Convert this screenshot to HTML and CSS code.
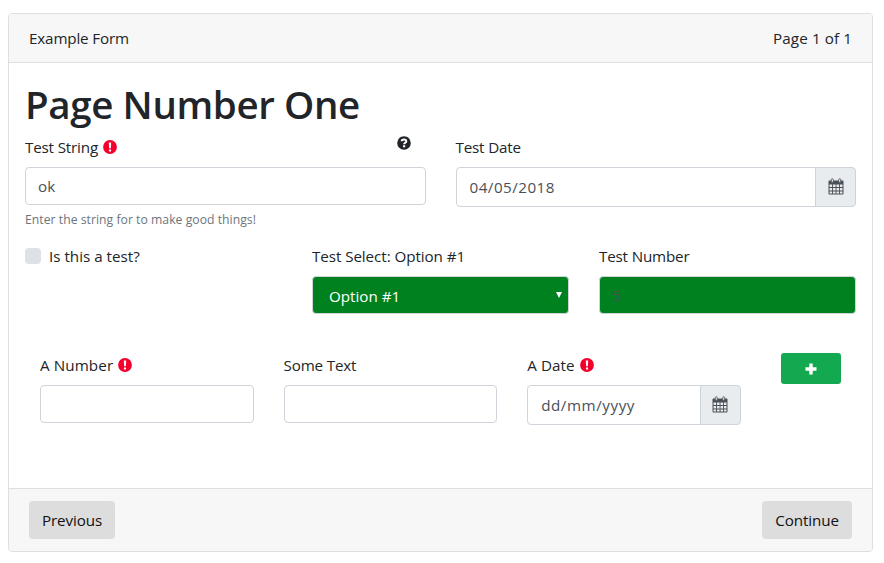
FILE: index.html
```html
<!DOCTYPE html>
<html lang="en">
<head>
<meta charset="utf-8">
<title>Example Form</title>
<link rel="stylesheet" href="styles.css">
</head>
<body>
<svg class="sprite" aria-hidden="true">
  <symbol id="required" viewBox="0 0 14 14"><circle cx="7" cy="7" r="6.9" fill="#f5002d"/><path d="M5.8 2.5h2.4L7.9 8.3H6.1zM5.9 9.4h2.2v2H5.9z" fill="#fff"/></symbol>
  <symbol id="help" viewBox="0 0 14 14"><circle cx="7" cy="7" r="6.8" fill="#212529"/><path d="M4.7 5.3C4.700 2.900 9.300 2.900 9.300 5.200c0 1.500-2.200 1.500-2.200 3.100" fill="none" stroke="#fff" stroke-width="2"/><path d="M6 9.300h2.200v2H6z" fill="#fff"/></symbol>
  <symbol id="calendar" viewBox="0 0 16 17"><path d="M1.500 2.500h13a1 1 0 0 1 1 1v12a1 1 0 0 1-1 1h-13a1 1 0 0 1-1-1v-12a1 1 0 0 1 1-1z" fill="#495057"/><path d="M1.500 6.500h2.600v2.500H1.500zM5 6.500h2.600v2.500H5zM8.500 6.500h2.600v2.500H8.500zM12 6.500h2.500v2.500H12zM1.500 10h2.600v2.500H1.500zM5 10h2.600v2.500H5zM8.500 10h2.600v2.500H8.500zM12 10h2.500v2.500H12zM1.500 13.500h2.600v2H1.500zM5 13.500h2.600v2H5zM8.500 13.500h2.600v2H8.500zM12 13.500h2.500v2H12z" fill="#e9ecef"/><rect x="3.300" y=".7" width="2" height="3.700" rx="1" fill="#e9ecef" stroke="#495057" stroke-width=".8"/><rect x="10.700" y=".7" width="2" height="3.700" rx="1" fill="#e9ecef" stroke="#495057" stroke-width=".8"/></symbol>
</svg>
<form class="card">
  <header class="card-header"><span class="title">Example Form</span><span class="pager">Page 1 of 1</span></header>
  <main class="card-body">
    <h1><span>Page Number One</span></h1>
    <div class="row halves">
      <div class="field">
        <div class="label-line"><label for="string">Test String</label><svg class="required"><use href="#required"/></svg><svg class="help"><use href="#help"/></svg></div>
        <input id="string" class="control" type="text" value="ok">
        <small>Enter the string for to make good things!</small>
      </div>
      <div class="field">
        <div class="label-line"><label for="date">Test Date</label></div>
        <div class="input-group"><input id="date" class="control date-value" type="text" value="04/05/2018"><span class="addon"><svg><use href="#calendar"/></svg></span></div>
      </div>
    </div>
    <div class="row thirds">
      <div class="check"><span class="box"></span><span class="check-text">Is this a test?</span></div>
      <div class="field">
        <div class="label-line"><label class="select-label" for="select">Test Select: Option #1</label></div>
        <div class="control green select" id="select"><span>Option #1</span><svg class="arrow" viewBox="0 0 6 6"><path d="M0 0h6L3 6z" fill="#fff"/></svg></div>
      </div>
      <div class="field">
        <div class="label-line"><label for="number">Test Number</label></div>
        <input id="number" class="control green" type="text" value="5">
      </div>
    </div>
    <div class="row repeat">
      <div class="field">
        <div class="label-line"><label class="a-number" for="a-number">A Number</label><svg class="required"><use href="#required"/></svg></div>
        <input id="a-number" class="control" type="text">
      </div>
      <div class="field">
        <div class="label-line"><label for="some-text">Some Text</label></div>
        <input id="some-text" class="control" type="text">
      </div>
      <div class="field">
        <div class="label-line"><label class="a-date" for="a-date">A Date</label><svg class="required"><use href="#required"/></svg></div>
        <div class="input-group"><input id="a-date" class="control date-empty" type="text" value="dd/mm/yyyy"><span class="addon"><svg><use href="#calendar"/></svg></span></div>
      </div>
      <button class="add" type="button" aria-label="Add"><svg viewBox="0 0 12 12"><path d="M4.300.5h3.400v3.800h3.800v3.400H7.700v3.800H4.300V7.700H.5V4.300h3.800z" fill="#fff"/></svg></button>
    </div>
  </main>
  <footer class="card-footer"><button class="btn previous" type="button">Previous</button><button class="btn continue" type="button">Continue</button></footer>
</form>
</body>
</html>
```
FILE: styles.css
```css
* { box-sizing: border-box; }
body {
  margin: 0;
  padding: 13px 11px 11px 8px;
  background: #fff;
  color: #212529;
  font: 15.2px/24px "Open Sans", "Noto Sans", sans-serif;
}
.sprite { display: none; }
svg { display: block; flex: none; }
.card {
  height: 539px;
  display: flex;
  flex-direction: column;
  border: 1px solid #dfdfdf;
  border-radius: 4px;
  overflow: hidden;
}
.card-header, .card-footer {
  display: flex;
  justify-content: space-between;
  background: #f7f7f7;
  padding: 12px 20px;
}
.card-header { height: 49px; border-bottom: 1px solid #dfdfdf; }
.card-footer { height: 63px; border-top: 1px solid #dfdfdf; }
.card-body { flex: 1; padding: 16px; }
.title { letter-spacing: -.15px; }
.pager { letter-spacing: .1px; }
h1 { margin: 0 0 8px; font-size: 38.5px; letter-spacing: -.38px; line-height: 50px; height: 48px; font-weight: 600; white-space: nowrap; }
.row { display: grid; column-gap: 30px; }
.halves { grid-template-columns: 1fr 1fr; height: 109px; }
.thirds { grid-template-columns: repeat(3, 1fr); height: 109px; }
.repeat { grid-template-columns: repeat(3, 213.600px) 60px; padding-left: 15px; align-items: start; }
.field { min-width: 0; }
.label-line { height: 24px; margin-bottom: 8px; display: flex; align-items: center; white-space: nowrap; letter-spacing: -.17px; }
.select-label { letter-spacing: -.07px; }
.a-number, .a-date { letter-spacing: .1px; }
.required { width: 14px; height: 14px; margin-left: 5px; }
.help { width: 14px; height: 14px; margin: -8px 15px 0 auto; }
.control {
  display: block;
  width: 100%;
  height: 38px;
  padding: 6px 12px;
  border: 1px solid #ced4da;
  border-radius: 4px;
  background: #fff;
  color: #495057;
  font: inherit;
}
small { display: block; margin-top: 5px; font-size: 12.200px; letter-spacing: .03px; line-height: 20px; color: #6c757d; white-space: nowrap; }
.input-group { display: flex; height: 40px; }
.input-group .control { flex: 1; min-width: 0; height: 40px; padding-left: 13px; border-radius: 4px 0 0 4px; }
.date-value { letter-spacing: .48px; }
.date-empty { letter-spacing: .55px; }
.addon {
  width: 41px;
  margin-left: -1px;
  display: grid;
  place-items: center;
  background: #e9ecef;
  border: 1px solid #ced4da;
  border-radius: 0 4px 4px 0;
}
.addon svg { width: 16px; height: 17px; margin-top: -2px; }
.check { display: flex; height: 24px; align-items: center; }
.box { width: 16px; height: 16px; margin-right: 8px; border-radius: 4px; background: #dee2e6; }
.green { background: #00811f; }
.select { display: flex; align-items: center; justify-content: space-between; padding: 2px 6px 0 16px; color: #fff; }
.arrow { width: 6px; height: 6px; margin-top: -2px; }
.add { width: 60px; height: 31px; padding: 0; margin-left: 10px; border: 0; border-radius: 3px; background: #12a951; display: grid; place-items: center; }
.add svg { width: 12px; height: 12px; }
.btn { height: 38px; border: 0; border-radius: 4px; padding: 0; background: #ddd; color: #111; font: inherit; letter-spacing: -.1px; }
.previous { width: 86px; }
.continue { width: 90px; }
```
